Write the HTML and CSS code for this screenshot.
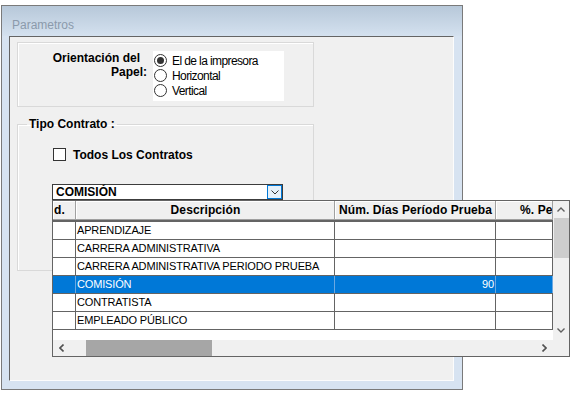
FILE: index.html
```html
<!DOCTYPE html>
<html lang="es">
  <head>
    <meta charset="UTF-8" />
    <meta name="viewport" content="width=device-width, initial-scale=1.0" />
    <title>Parametros</title>

    <link rel="stylesheet" href="styles.css">
  </head>
  <body>
    <!-- WINDOW -->
    <div class="window">
      <div class="titlebar">Parametros</div>

      <div class="client">
        <!-- ORIENTACION -->
        <div class="group orient">
          <div class="orient-label">
            <span class="l1">Orientación del</span>
            <span>Papel:</span>
          </div>
          <div class="radios">
            <label class="radio"><span class="radio-dot on"></span>El de la impresora</label>
            <label class="radio"><span class="radio-dot"></span>Horizontal</label>
            <label class="radio"><span class="radio-dot"></span>Vertical</label>
          </div>
        </div>

        <!-- TIPO CONTRATO -->
        <fieldset class="group tipo">
          <legend>Tipo Contrato :</legend>
          <label class="check"><span class="check-box"></span>Todos Los Contratos</label>

          <div class="combo">
            <span class="combo-text">COMISIÓN</span>
            <span class="combo-btn">
              <svg width="8" height="5" viewBox="0 0 8 5"><path d="M0.5 0.5 L4 4 L7.5 0.5" fill="none" stroke="#333" stroke-width="1" /></svg>
            </span>

            <!-- DROPDOWN LIST -->
            <div class="popup">
              <div class="table">
                <div class="head">
                  <div class="cell c1 left">d.</div>
                  <div class="cell c2">Descripción</div>
                  <div class="cell c3">Núm. Días Período Prueba</div>
                  <div class="cell c4 pe">%. Pe</div>
                </div>
                <div class="row">
                  <div class="cell c1"></div><div class="cell c2">APRENDIZAJE</div><div class="cell c3"></div><div class="cell c4"></div>
                </div>
                <div class="row">
                  <div class="cell c1"></div><div class="cell c2">CARRERA ADMINISTRATIVA</div><div class="cell c3"></div><div class="cell c4"></div>
                </div>
                <div class="row">
                  <div class="cell c1"></div><div class="cell c2">CARRERA ADMINISTRATIVA PERIODO PRUEBA</div><div class="cell c3"></div><div class="cell c4"></div>
                </div>
                <div class="row sel">
                  <div class="cell c1"></div><div class="cell c2">COMISIÓN</div><div class="cell c3 num">90</div><div class="cell c4"></div>
                </div>
                <div class="row">
                  <div class="cell c1"></div><div class="cell c2">CONTRATISTA</div><div class="cell c3"></div><div class="cell c4"></div>
                </div>
                <div class="row">
                  <div class="cell c1"></div><div class="cell c2">EMPLEADO PÚBLICO</div><div class="cell c3"></div><div class="cell c4"></div>
                </div>
              </div>

              <div class="vscroll">
                <span class="sb-btn">
                  <svg width="8" height="5" viewBox="0 0 8 5"><path d="M0.5 4.5 L4 1 L7.5 4.5" fill="none" stroke="#606060" stroke-width="1.4" /></svg>
                </span>
                <span class="vthumb"></span>
                <span class="sb-btn down">
                  <svg width="8" height="5" viewBox="0 0 8 5"><path d="M0.5 0.5 L4 4 L7.5 0.5" fill="none" stroke="#606060" stroke-width="1.4" /></svg>
                </span>
              </div>

              <div class="hscroll">
                <span class="sb-btn">
                  <svg width="5" height="8" viewBox="0 0 5 8"><path d="M4.5 0.5 L1 4 L4.5 7.5" fill="none" stroke="#505050" stroke-width="1.6" /></svg>
                </span>
                <span class="hthumb"></span>
                <span class="sb-btn right">
                  <svg width="5" height="8" viewBox="0 0 5 8"><path d="M0.5 0.5 L4 4 L0.5 7.5" fill="none" stroke="#505050" stroke-width="1.6" /></svg>
                </span>
              </div>

              <div class="corner"></div>
            </div>
          </div>
        </fieldset>
      </div>
    </div>
  </body>
</html>
```

FILE: styles.css
```css
/* GLOBAL */
html,
body {
  margin: 0;
  padding: 0;
}
body {
  background: #fff;
  color: #000;
  font-family: "Liberation Sans", Arial, sans-serif;
  font-size: 11px;
}

/* WINDOW FRAME */
.window {
  box-sizing: border-box;
  width: 462px;
  height: 385px;
  margin: 5px 0 0 1px;
  padding: 0 8px 8px 7px;
  border: 1px solid #7a7a7a;
  background: #d7e3f1;
}
.titlebar {
  box-sizing: border-box;
  height: 30px;
  margin: 0 -8px 0 -7px;
  padding: 11px 0 0 10px;
  line-height: 16px;
  font-size: 12px;
  color: #8b9aab;
  background: linear-gradient(#b7c8d9, #d4e1ef);
}
.client {
  box-sizing: border-box;
  width: 445px;
  height: 345px;
  padding: 5px 0 0 7px;
  border: 1px solid;
  border-color: #646464 #fcfcfc #fcfcfc #646464;
  background: #f0f0f0;
}

/* GROUP BOXES */
.group {
  box-sizing: border-box;
  width: 297px;
  border: 1px solid #d9d9d9;
  box-shadow: inset 1px 1px 0 #fff;
}
.orient {
  display: flex;
  height: 65px;
  padding-top: 8px;
}
.orient-label {
  width: 129px;
  margin-right: 6px;
  text-align: right;
  font-weight: bold;
  font-size: 12px;
  line-height: 14px;
}
.orient-label span {
  display: block;
}
.orient-label .l1 {
  padding-right: 7px;
}
.radios {
  box-sizing: border-box;
  width: 131px;
  height: 50px;
  padding: 2px 0 0 1px;
  background: #fff;
}
.radio {
  display: flex;
  align-items: center;
  gap: 5px;
  height: 15px;
  font-size: 12px;
  letter-spacing: -0.6px;
}
.radio-dot {
  box-sizing: border-box;
  display: flex;
  align-items: center;
  justify-content: center;
  flex: none;
  width: 13px;
  height: 13px;
  border: 1px solid #333;
  border-radius: 50%;
  background: #fff;
}
.radio-dot.on::after {
  content: "";
  width: 7px;
  height: 7px;
  border-radius: 50%;
  background: #333;
}

.tipo {
  min-width: 0;
  margin: 10px 0 0;
  padding: 0 0 70px 9px;
}
.tipo legend {
  padding: 0 2px;
  font-weight: bold;
  font-size: 12px;
  line-height: 14px;
}
.check {
  display: flex;
  align-items: center;
  gap: 7px;
  height: 13px;
  margin: 17px 0 0 26px;
  font-weight: bold;
  font-size: 12px;
}
.check-box {
  box-sizing: border-box;
  width: 13px;
  height: 13px;
  border: 1px solid #333;
  background: #fff;
}

/* COMBO */
.combo {
  position: relative;
  box-sizing: border-box;
  display: flex;
  align-items: center;
  justify-content: space-between;
  width: 231px;
  height: 16px;
  margin: 23px 0 0 25px;
  border: 1px solid #3c3c3c;
  background: #fff;
}
.combo-text {
  padding-left: 3px;
  font-weight: bold;
  font-size: 12px;
}
.combo-btn {
  box-sizing: border-box;
  display: flex;
  align-items: center;
  justify-content: center;
  width: 15px;
  height: 14px;
  border: 1px solid #0078d7;
  background: #e5f1fb;
}

/* DROPDOWN GRID */
.popup {
  position: absolute;
  left: -1px;
  top: calc(100% + 1px);
  z-index: 10;
  box-sizing: border-box;
  display: grid;
  grid-template-columns: 500px 16px;
  grid-template-rows: 139px 16px;
  width: 518px;
  height: 157px;
  border: 1px solid #646464;
  background: #f0f0f0;
}
.table {
  overflow: hidden;
  background: #fff;
}
.head,
.row {
  display: flex;
  box-sizing: border-box;
  white-space: nowrap;
}
.head {
  height: 21px;
  border-bottom: 2px solid #646464;
}
.row {
  height: 18px;
  border-bottom: 1px solid #646464;
  letter-spacing: -0.15px;
}
.cell {
  flex: none;
  box-sizing: border-box;
  overflow: hidden;
  padding-left: 1px;
  border-right: 1px solid #646464;
  line-height: 17px;
}
.head .cell {
  height: 19px;
  border-right-color: #a0a0a0;
  border-bottom: 1px solid #a0a0a0;
  box-shadow: inset 1px 1px 0 #fff;
  background: #f0f0f0;
  text-align: center;
  font-weight: bold;
  font-size: 12px;
  line-height: 18px;
  letter-spacing: 0.1px;
}
.head .cell.left {
  text-align: left;
}
.head .cell.pe {
  padding-left: 24px;
  text-align: left;
}
.c1 { width: 23px; }
.c2 { width: 259px; }
.c3 { width: 161px; }
.c4 { width: 57px; }
.num {
  padding-right: 1px;
  text-align: right;
}
.row.sel {
  background: #0078d7;
  color: #fff;
}
.row.sel .cell {
  border-right-color: #6aa8e2;
}

/* SCROLLBARS */
.sb-btn {
  display: flex;
  align-items: center;
  justify-content: center;
  flex: none;
  width: 16px;
  height: 17px;
}
.vscroll {
  display: flex;
  flex-direction: column;
}
.vthumb {
  width: 15px;
  height: 40px;
  margin-left: 1px;
  background: #cdcdcd;
}
.sb-btn.down {
  margin-top: auto;
  margin-bottom: 1px;
}
.hscroll {
  display: flex;
}
.hscroll .sb-btn {
  width: 17px;
  height: 16px;
}
.hthumb {
  width: 126px;
  height: 16px;
  margin-left: 16px;
  background: #a6a6a6;
}
.sb-btn.right {
  margin-left: auto;
}
.corner {
  background: #f0f0f0;
}
```
